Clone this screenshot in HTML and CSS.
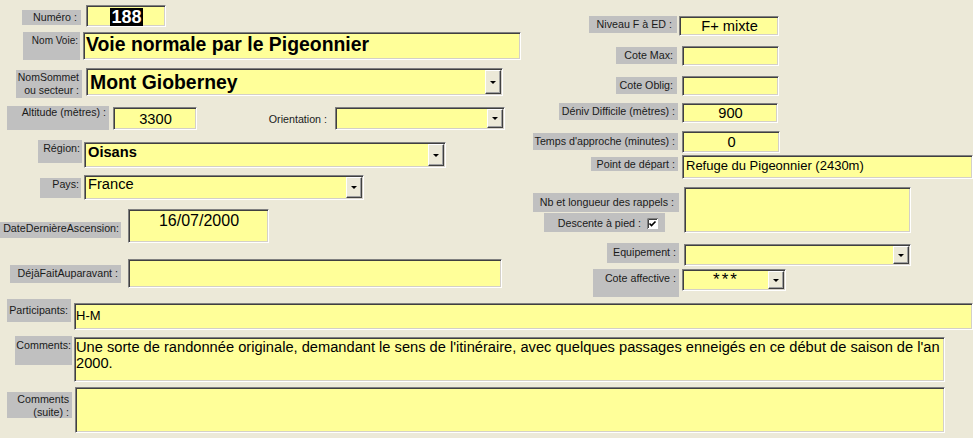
FILE: index.html
```html
<!DOCTYPE html>
<html lang="fr">
<head>
  <meta charset="UTF-8">
  <title>Fiche course</title>
  <link rel="stylesheet" href="styles.css">
</head>
<body>
  <div class="form">
    <div class="top">
      <!-- colonne gauche -->
      <div class="col-left">
        <div class="row r-numero">
          <div class="lbl l-numero">Numéro :</div>
          <div class="fld f-numero"><span class="sel">188</span></div>
        </div>
        <div class="row r-voie">
          <div class="lbl l-voie">Nom Voie:</div>
          <div class="fld f-voie">Voie normale par le Pigeonnier</div>
        </div>
        <div class="row r-sommet">
          <div class="lbl l-sommet">NomSommet<br>ou secteur :</div>
          <div class="fld combo c-sommet"><span class="txt">Mont Gioberney</span><span class="btn"></span></div>
        </div>
        <div class="row r-alt">
          <div class="lbl l-alt">Altitude (mètres) :</div>
          <div class="fld f-alt">3300</div>
          <div class="lbl plain l-orient">Orientation :</div>
          <div class="fld combo c-orient"><span class="txt"></span><span class="btn"></span></div>
        </div>
        <div class="row r-region">
          <div class="lbl l-region">Région:</div>
          <div class="fld combo c-region"><span class="txt">Oisans</span><span class="btn"></span></div>
        </div>
        <div class="row r-pays">
          <div class="lbl l-pays">Pays:</div>
          <div class="fld combo c-pays"><span class="txt">France</span><span class="btn"></span></div>
        </div>
        <div class="row r-date">
          <div class="lbl l-date">DateDernièreAscension:</div>
          <div class="fld f-date">16/07/2000</div>
        </div>
        <div class="row r-deja">
          <div class="lbl l-deja">DéjàFaitAuparavant :</div>
          <div class="fld f-deja"></div>
        </div>
      </div>

      <!-- colonne droite -->
      <div class="col-right">
        <div class="row r-niv">
          <div class="lbl l-niv">Niveau F à ED :</div>
          <div class="fld f-niv">F+ mixte</div>
        </div>
        <div class="row r-cote">
          <div class="lbl l-cote">Cote Max:</div>
          <div class="fld f-cote"></div>
        </div>
        <div class="row r-cote">
          <div class="lbl l-cote">Cote Oblig:</div>
          <div class="fld f-cote"></div>
        </div>
        <div class="row r-deniv">
          <div class="lbl l-deniv">Déniv Difficile (mètres) :</div>
          <div class="fld f-deniv">900</div>
        </div>
        <div class="row r-temps">
          <div class="lbl l-temps">Temps d'approche (minutes) :</div>
          <div class="fld f-temps">0</div>
        </div>
        <div class="row r-point">
          <div class="lbl l-point">Point de départ :</div>
          <div class="fld f-point">Refuge du Pigeonnier (2430m)</div>
        </div>
        <div class="row r-nb">
          <div class="nb-labels">
            <div class="lbl l-nb">Nb et longueur des rappels :</div>
            <div class="lbl l-desc">
              <span>Descente à pied :</span>
              <svg class="chk" width="11" height="11" viewBox="0 0 11 11">
                <rect x="0" y="0" width="11" height="11" fill="#fff"/>
                <path d="M0.5 11V0.5H11" fill="none" stroke="#808080"/>
                <path d="M1.5 10V1.5H10" fill="none" stroke="#404040"/>
                <path d="M2.5 5.5L4.5 7.5L8.5 3.5" fill="none" stroke="#000" stroke-width="1.6"/>
              </svg>
            </div>
          </div>
          <div class="fld f-nb"></div>
        </div>
        <div class="row r-equip">
          <div class="lbl l-equip">Equipement :</div>
          <div class="fld combo c-equip"><span class="txt"></span><span class="btn"></span></div>
        </div>
        <div class="row r-aff">
          <div class="lbl l-aff">Cote affective :</div>
          <div class="fld combo c-aff"><span class="txt">***</span><span class="btn"></span></div>
        </div>
      </div>
    </div>

    <!-- bas de fiche -->
    <div class="row r-part">
      <div class="lbl l-part">Participants:</div>
      <div class="fld f-part">H-M</div>
    </div>
    <div class="row r-comm">
      <div class="lbl l-comm">Comments:</div>
      <div class="fld f-comm">Une sorte de randonnée originale, demandant le sens de l'itinéraire, avec quelques passages enneigés en ce début de saison de l'an 2000.</div>
    </div>
    <div class="row r-suite">
      <div class="lbl l-suite">Comments<br>(suite) :</div>
      <div class="fld f-suite"></div>
    </div>
  </div>
</body>
</html>
```

FILE: styles.css
```css
* {
  box-sizing: border-box;
  margin: 0;
  padding: 0;
}
body {
  background-color: #ece9d8;
  color: #000;
  font-family: 'Liberation Sans', Arial, sans-serif;
  width: 973px;
  height: 438px;
  overflow: hidden;
}
.top {
  display: flex;
}
.col-left {
  width: 530px;
  flex-shrink: 0;
}
.col-right {
  flex: 1;
}
.row {
  display: flex;
  align-items: flex-start;
}

/* étiquettes */
.lbl {
  background-color: #c0c0c0;
  color: #1a1a1a;
  font-size: 10.7px;
  line-height: 13px;
  text-align: right;
  white-space: nowrap;
  padding: 2px 3px 0 0;
  flex-shrink: 0;
}
.lbl.plain {
  background: none;
}

/* champs (effet enfoncé) */
.fld {
  background-color: #ffff99;
  border: 1px solid;
  border-color: #808080 #fff #fff #808080;
  box-shadow: inset 1px 1px #404040, inset -1px -1px #d4d0c8;
  font-size: 14.67px;
  line-height: 17px;
  padding: 2px 2px 0 3px;
  white-space: nowrap;
  overflow: hidden;
  flex-shrink: 0;
}
.combo {
  display: flex;
  padding: 0;
}
.combo .txt {
  flex: 1;
  padding: 1px 2px 0 3px;
  overflow: hidden;
}
.combo .btn {
  width: 16px;
  margin: 1px 1px 1px 0;
  background-color: #ece9d8;
  border: 1px solid;
  border-color: #fff #404040 #404040 #fff;
  box-shadow: inset -1px -1px #a0a0a0;
  display: flex;
  align-items: center;
  justify-content: center;
}
.combo .btn::after {
  content: "";
  border-left: 3px solid transparent;
  border-right: 3px solid transparent;
  border-top: 3px solid #000;
}

/* colonne gauche */
.r-numero { margin-top: 5px; }
.l-numero { margin: 5px 0 0 22px; width: 59px; height: 15px; padding: 1px 4px 0 0; }
.f-numero { margin-left: 5px; width: 80px; height: 22px; text-align: center; padding-top: 2px; }
.sel {
  display: inline-block;
  background-color: #000;
  color: #fff;
  font-weight: bold;
  font-size: 18px;
  line-height: 18px;
  padding: 0 1px;
}

.r-voie { margin-top: 5px; }
.l-voie { margin-left: 23px; width: 57px; height: 28px; font-size: 10px; padding: 2px 2px 0 0; }
.f-voie { margin-left: 3px; width: 438px; height: 28px; font-size: 19.4px; font-weight: bold; line-height: 20px; padding: 1px 2px 0 2px; }

.r-sommet { margin-top: 8px; }
.l-sommet { margin: 2px 0 0 16px; width: 66px; height: 28px; font-size: 10.5px; padding: 1px 3px 0 0; }
.c-sommet { margin-left: 4px; width: 417px; height: 28px; }
.c-sommet .txt { font-size: 19.4px; font-weight: bold; line-height: 22px; padding-top: 2px; }

.r-alt { margin-top: 8px; }
.l-alt { margin-left: 7px; width: 102px; height: 24px; padding-top: 0; }
.f-alt { margin: 1px 0 0 4px; width: 84px; height: 23px; text-align: center; padding-top: 3px; }
.l-orient { margin: 7px 0 0 63px; width: 71px; height: 13px; padding: 0 4px 0 0; }
.c-orient { margin: 1px 0 0 4px; width: 170px; height: 23px; }

.r-region { margin-top: 10px; }
.l-region { margin-left: 38px; width: 44px; height: 23px; padding: 2px 2px 0 0; }
.c-region { margin: 2px 0 0 2px; width: 362px; height: 26px; }
.c-region .txt { font-weight: bold; padding-top: 1px; }

.r-pays { margin-top: 7px; }
.l-pays { margin: 3px 0 0 40px; width: 41px; height: 20px; padding: 0 2px 0 0; }
.c-pays { margin-left: 3px; width: 280px; height: 25px; }
.c-pays .txt { padding-top: 0; }

.r-date { margin-top: 9px; }
.l-date { margin-top: 13px; width: 121px; height: 16px; padding: 0 2px 0 0; }
.f-date { margin-left: 7px; width: 141px; height: 34px; font-size: 16px; line-height: 18px; text-align: center; padding-top: 2px; }

.r-deja { margin-top: 16px; }
.l-deja { margin: 6px 0 0 10px; width: 111px; height: 18px; padding: 2px 3px 0 0; }
.f-deja { margin-left: 7px; width: 374px; height: 29px; }

/* colonne droite */
.r-niv { margin-top: 16px; }
.l-niv { margin-left: 59px; width: 88px; height: 17px; padding: 2px 5px 0 0; }
.f-niv { margin-left: 2px; width: 100px; height: 20px; text-align: center; padding-top: 1px; }

.r-cote { margin-top: 10px; }
.l-cote { margin: 1px 0 0 86px; width: 61px; height: 17px; padding: 2px 4px 0 0; }
.f-cote { margin-left: 5px; width: 97px; height: 20px; }

.r-deniv { margin-top: 7px; }
.l-deniv { margin-left: 29px; width: 119px; height: 17px; padding: 2px 3px 0 0; }
.f-deniv { margin-left: 4px; width: 96px; height: 20px; text-align: center; padding-top: 1px; }

.r-temps { margin-top: 8px; }
.l-temps { margin: 2px 0 0 3px; width: 145px; height: 17px; padding: 2px 3px 0 0; }
.f-temps { margin-left: 4px; width: 98px; height: 22px; text-align: center; padding-top: 2px; }

.r-point { margin-top: 2px; }
.l-point { margin: 2px 0 0 61px; width: 87px; height: 14px; padding: 1px 3px 0 0; }
.f-point { margin-left: 4px; width: 291px; height: 24px; font-size: 13px; line-height: 16px; padding-top: 2px; }

.r-nb { margin-top: 8px; }
.nb-labels {
  display: flex;
  flex-direction: column;
  align-items: flex-start;
  margin-left: 3px;
}
.l-nb { margin-top: 6px; width: 146px; height: 19px; padding: 3px 5px 0 0; }
.l-desc {
  margin: 1px 0 0 11px;
  width: 121px;
  height: 19px;
  display: flex;
  justify-content: flex-end;
  align-items: flex-start;
  padding: 5px 7px 0 0;
}
.l-desc span {
  margin-top: -1px;
}
.chk {
  margin-left: 6px;
  flex-shrink: 0;
}
.f-nb { margin-left: 5px; width: 227px; height: 46px; }

.r-equip { margin-top: 10px; }
.l-equip { margin-left: 77px; width: 72px; height: 20px; padding: 3px 3px 0 0; }
.c-equip { margin: 1px 0 0 5px; width: 227px; height: 22px; }

.r-aff { margin-top: 3px; }
.l-aff { margin-left: 63px; width: 86px; height: 28px; padding: 3px 3px 0 0; }
.c-aff { margin-left: 3px; width: 104px; height: 22px; }
.c-aff .txt { text-align: center; font-size: 17px; letter-spacing: 2px; line-height: 18px; padding-top: 1px; }

/* bas de fiche */
.r-part { margin-top: 2px; }
.l-part { margin-left: 7px; width: 64px; height: 23px; padding: 5px 3px 0 0; }
.f-part { margin: 4px 0 0 3px; width: 899px; height: 27px; font-size: 13px; line-height: 16px; padding: 4px 2px 0 1px; }

.r-comm { margin-top: 6px; }
.l-comm { margin-left: 15px; width: 57px; height: 29px; padding: 3px 1px 0 0; }
.f-comm { margin: 1px 0 0 2px; width: 871px; height: 45px; font-size: 14.67px; line-height: 16px; white-space: normal; padding: 1px 2px 0 1px; }

.r-suite { margin-top: 5px; }
.l-suite { margin: 5px 0 0 7px; width: 65px; height: 26px; padding: 1px 3px 0 0; }
.f-suite { margin-left: 3px; width: 870px; height: 46px; }
```
